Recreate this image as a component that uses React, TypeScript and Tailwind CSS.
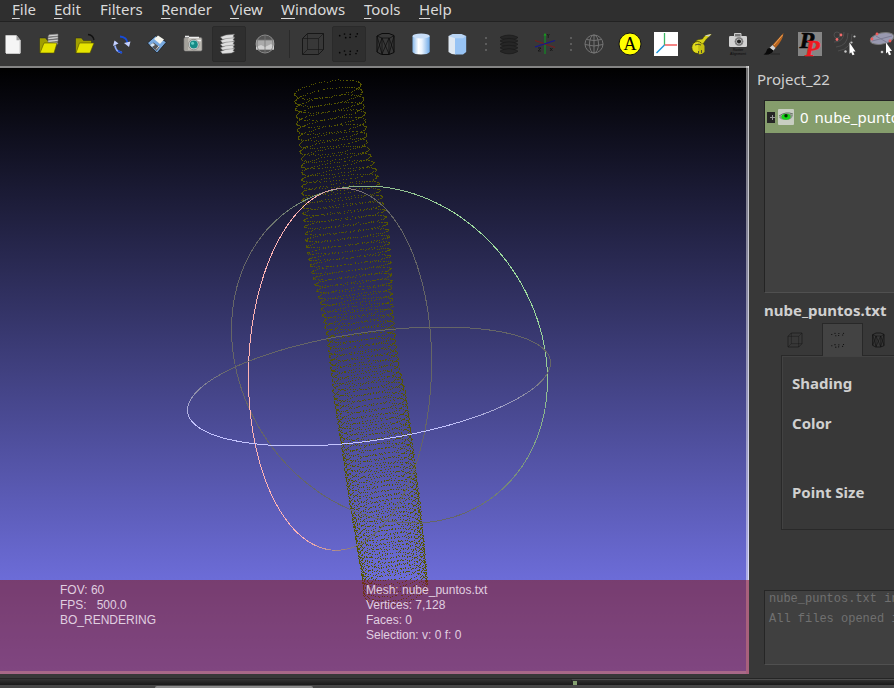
import React from "react";

const NOTO = "font-['Noto_Sans',sans-serif]";

type P = { children?: React.ReactNode; active?: boolean };

function Cell({ children, active }: P) {
  return (
    <div className={`flex h-[36px] shrink-0 items-center justify-center ${active ? "mx-px w-[34px] rounded-[2px] border border-[#2a2a2a] bg-[#2f2f2f]" : "w-[36px]"}`}>
      <svg width="24" height="24" viewBox="0 0 24 24" className="shrink-0 overflow-visible">
        {children}
      </svg>
    </div>
  );
}

const Wire = () => (
  <g fill="none" stroke="#141414" strokeWidth="0.9">
    <path d="M1.500 6.500 6.500 1.500H22.500V17.500L17.500 22.500H1.500z" />
    <path d="M1.500 6.500H17.500V22.500M17.500 6.500 22.500 1.500M6.500 1.500V17.500H22.500M1.500 22.500 6.500 17.500" strokeWidth="0.6" />
  </g>
);

const dotSpots = [[2.700, 3.700], [7.500, 2], [8.700, 5.700], [13.300, 2.300], [13, 5.300], [19, 4.500], [20.300, 1.800]];
const Dots = () => (
  <g fill="#060606">
    {dotSpots.map(([x, y], i) => <circle key={i} cx={x} cy={y} r="0.850" />)}
    {dotSpots.map(([x, y], i) => <circle key={i} cx={x} cy={y + 17} r="0.850" />)}
  </g>
);

const WireCyl = () => (
  <g fill="none" stroke="#0b0b0b" strokeWidth="1">
    <path d="M4 4 9 1.500h7l5 2v17L16 22.500H8.500L4 20z" />
    <path d="M4 4 9 6h8l4-2.500M9 6v16M16 6v16M4 4 9 22M9 6 16 22M21 4 16 22M4 20 9 6M9 22 16 6 21 20" strokeWidth="0.700" />
  </g>
);

const layers = [0, 3.600, 7.200, 10.800, 14.400];

function Menu({ t, k = 0, w }: { t: string; k?: number; w: string }) {
  return (
    <span className={`${w} shrink-0 whitespace-pre`}>
      {t.slice(0, k)}
      <span className="underline decoration-1 underline-offset-[3px]">{t[k]}</span>
      {t.slice(k + 1)}
    </span>
  );
}

function Grip({ w }: { w: string }) {
  return (
    <div className={`flex h-[14px] shrink-0 flex-col justify-between ${w}`}>
      <i className="h-[2px] w-[2px] bg-[#5c5c5c]" />
      <i className="h-[2px] w-[2px] bg-[#5c5c5c]" />
      <i className="h-[2px] w-[2px] bg-[#5c5c5c]" />
    </div>
  );
}

function Toolbar() {
  return (
    <div className="flex h-[45px] shrink-0 items-center overflow-hidden border-t border-[#222] bg-[#383838]">
      <div className="-ml-[5px] flex shrink-0 items-center">
        <Cell>
          <path d="M4.500 3.200h11l4 5V21H4.500z" fill="#f5f5f5" />
          <path d="M15.500 3.200v5h4z" fill="#999" />
          <path d="M19 9v12.500H5" stroke="#c9c9c9" fill="none" />
        </Cell>
        <Cell>
          <path d="M2.500 6h6l2 2.500h8V13l-5 8H2.500z" fill="#a19f00" stroke="#222" strokeWidth=".5" />
          <g fill="#d5d5d5" stroke="#777" strokeWidth=".6">
            <path d="m11 11 9-1 1 2-10 1zM11 8.300l10-1 0 2-10 1zM11 5.600l10-1 0 2-10 1zM12 2.800l9-.8v2l-10 1z" />
          </g>
          <path d="M3 21 7 11h13l-3 10z" fill="#e6e400" stroke="#555200" strokeWidth=".6" />
        </Cell>
        <Cell>
          <path d="M2.500 6h6l2 2.500h8V13l-5 8H2.500z" fill="#a19f00" stroke="#222" strokeWidth=".5" />
          <path d="M3 21 6.500 11H21l-4 10z" fill="#e6e400" stroke="#555200" strokeWidth=".6" />
          <path d="M15 2.500q5 .5 6 5.500" stroke="#111" fill="none" strokeWidth="1.300" />
        </Cell>
        <Cell>
          <path d="M11 4.500q6.500.5 7.500 6" stroke="#174bd8" fill="none" strokeWidth="1.800" />
          <path d="m15 11 6.500-1.500L20 15z" fill="#c4d1ff" />
          <path d="M12.500 20.500q-6-1-6.500-7" stroke="#8daaf8" fill="none" strokeWidth="1.800" />
          <path d="m4 14 1.500-5.500 4 3z" fill="#c4d1ff" />
          <path d="m9 18.500 4 2.500" stroke="#174bd8" strokeWidth="1.800" />
        </Cell>
        <Cell>
          <path d="m2.500 11 8-7 11 6-9.500 11z" fill="#78a9df" stroke="#111" strokeWidth=".7" />
          <path d="m9 7 4-3.500 6 4-4 4.500z" fill="#f5f5ee" />
          <path d="m5 13 3.500-2.500 6 4.500-3 4z" fill="#555" />
          <path d="m5 13 3-2 2 2-3 2z" fill="#d4e5f5" />
          <path d="m11 17.500 3-3.500" stroke="#ddd" />
        </Cell>
        <Cell>
          <rect x="3" y="5.500" width="18" height="13.500" rx="1.500" fill="#bdbab3" stroke="#777" strokeWidth=".7" />
          <path d="M4 4.500h4M8 5.500h10M15 8.500h5" stroke="#eee" strokeWidth="1.300" />
          <path d="M4 6v12M6 6v12" stroke="#8b8984" />
          <circle cx="12.800" cy="12.600" r="5.200" fill="#ddd" stroke="#666" strokeWidth=".6" />
          <circle cx="12.800" cy="12.600" r="4" fill="#168b86" />
          <circle cx="11.600" cy="11.200" r="1.500" fill="#66cec5" />
        </Cell>
        <Cell active>
          {layers.map((y, i) => <path key={i} d={`M3.500 ${5 + y}L9 ${3 + y}l8.500-.8-1.500 2 1.500 1-3 1.500-9 .6z`} fill="#dedede" stroke="#777" strokeWidth=".45" />)}
        </Cell>
        <Cell>
          <circle cx="12" cy="12" r="9" fill="#555" stroke="#898989" />
          <rect x="3" y="8" width="18" height="9.500" fill="#aaa" />
          <path d="m3 15 5-2 4 2 6-3 3 2v3.500H3z" fill="#d0d0d0" />
          <path d="M12 3v18M6 5q-4 7 0 14M18 5q4 7 0 14M3 8h18" stroke="#777" fill="none" strokeWidth=".8" />
        </Cell>
        <div className="flex w-[12px] shrink-0 justify-center">
          <i className="h-[28px] w-px bg-[#2a2a2a]" />
        </div>
        <Cell><Wire /></Cell>
        <Cell active><Dots /></Cell>
        <Cell><WireCyl /></Cell>
        <Cell>
          <defs>
            <linearGradient id="cyl">
              <stop offset="0" stopColor="#86b7ea" />
              <stop offset=".35" stopColor="#fff" />
              <stop offset=".55" stopColor="#e8f2fd" />
              <stop offset="1" stopColor="#6eaae8" />
            </linearGradient>
          </defs>
          <path d="M3.500 4v16q1.500 2.500 8.500 2.500t8.700-2.500V4z" fill="url(#cyl)" />
          <ellipse cx="12.100" cy="4" rx="8.600" ry="2.400" fill="#c7ddf7" />
        </Cell>
        <Cell>
          <path d="M3.500 4v16q3 2.500 7 2.500V4z" fill="#dfe8f2" />
          <path d="M10 5.500V22.500h8l3.200-2.500V4z" fill="#97c3f4" />
          <path d="m3.500 4 4-2h9l4.700 2-3.200 2.200H10z" fill="#b9d5f5" />
        </Cell>
        <Grip w="w-[16px] pl-[10px]" />
        <Cell>
          {layers.map((y, i) => <path key={i} d={`M3.500 ${5 + y * 0.950}q8.500-4 17 0v1q-8.500 4.500-17 0z`} fill="#262626" stroke="#171717" strokeWidth=".6" />)}
        </Cell>
        <Cell>
          <path d="M12 3v19" stroke="#1f6a2b" strokeWidth="2" />
          <path d="m2 8.500 20 7" stroke="#7c1a1a" strokeWidth="1" />
          <path d="m2 15 20-6.500" stroke="#16168e" strokeWidth="1.200" />
          <path d="m12 1-1.500 2.500h3z" fill="#18a51c" />
          <path d="M14 2l1.200 1.500L16.500 2M15.200 3.500V6M5 16h3l-3 3h3M17 16l2.500 3M19.500 16l-2.500 3" stroke="#151515" fill="none" strokeWidth=".8" />
        </Cell>
        <Grip w="w-[13px] pl-[7px]" />
        <Cell>
          <g fill="none" stroke="#747474" strokeWidth="1">
            <circle cx="12" cy="12" r="9" />
            <ellipse cx="12" cy="12" rx="4.500" ry="9" />
            <path d="M3 12.500q9 3 18 0M12 3v18M4.500 7.500q7.500 2 15 0" />
          </g>
        </Cell>
        <Cell>
          <circle cx="12" cy="12" r="11" fill="#ff0" stroke="#111" strokeWidth="1" />
          <text x="12" y="18" textAnchor="middle" fontSize="18" className="font-['Liberation_Serif',serif]" fill="#000">A</text>
        </Cell>
        <Cell>
          <rect width="24" height="24" fill="#fff" />
          <path d="M10.500 1v12" stroke="#3db765" strokeWidth="1.300" />
          <path d="M10.500 13H23" stroke="#f05b5b" strokeWidth="1.500" />
          <path d="m10.500 13-8 8" stroke="#1b95d9" strokeWidth="1.500" />
        </Cell>
        <Cell>
          <path d="M5 10q2-3 7.500-3 1.500-4 7.500-5l1.500.5-5 4.500-3.500 5z" fill="#d8d21b" stroke="#4a4800" strokeWidth=".6" />
          <path d="m14.500 3.500 7-1.500-2.500 2.500z" fill="#ccc" />
          <ellipse cx="7.500" cy="15.500" rx="5.700" ry="6" fill="#dfd91c" stroke="#333000" strokeWidth=".7" />
          <path d="M8 11q6 0 6.500 3v6q-3 3-6 2z" fill="#c5bf10" />
          <path d="M5 13q3-1.500 6 0M8.500 21.500v-2.500M11.500 21v-3" stroke="#333" strokeWidth=".8" fill="none" />
        </Cell>
        <Cell>
          <rect x="3" y="4" width="18" height="11" rx="1.300" fill="#d2d2d2" />
          <path d="M8.500 4.500V1.500h6.500v3" fill="#777" stroke="#ccc" />
          <circle cx="13" cy="9.500" r="4" fill="#666" stroke="#888" />
          <circle cx="13" cy="9.500" r="2.500" fill="#222" stroke="#ddd" strokeWidth=".8" />
          <text x="12" y="18.800" textAnchor="middle" fontSize="3.600" className="font-['Liberation_Sans',sans-serif]" fill="#0b0b0b">Raster</text>
          <text x="12" y="22.800" textAnchor="middle" fontSize="3.600" className="font-['Liberation_Sans',sans-serif]" fill="#0b0b0b">Alignment</text>
        </Cell>
        <Cell>
          <path d="M21.500 1 10.500 13l3 3Q21 8 21.500 1z" fill="#b96520" />
          <path d="M20.500 3 12 13" stroke="#e9a259" strokeWidth="1" />
          <path d="m10.500 13 3 3-2.500 3-3.500-3z" fill="#d5d5d5" />
          <path d="M8 16q-3 0-3.500 3-1 3-3 3.500 8 1 10-4z" fill="#0a0a0a" />
          <path d="M8.500 22H18" stroke="#222" strokeWidth=".8" />
        </Cell>
        <Cell>
          <rect width="24" height="24" fill="#858585" />
          <text x="1.500" y="16" fontSize="24" fontWeight="bold" fontStyle="italic" className="font-['Liberation_Serif',serif]" fill="#050505" stroke="#050505" strokeWidth=".6">P</text>
          <text x="7" y="23.500" fontSize="24" fontWeight="bold" fontStyle="italic" className="font-['Liberation_Serif',serif]" fill="#f01820" stroke="#f01820" strokeWidth=".5">P</text>
        </Cell>
        <Cell>
          <g fill="none" stroke="#4e4e4e" strokeWidth="1">
            <circle cx="3" cy="3" r="3" /><path d="M10 0q0 10-10 10M14 1q0 13-12 14M18 2q0 15-14 17" />
          </g>
          <g fill="#ef6a6a"><circle cx="7" cy="3" r="1.400" /><circle cx="3" cy="7.500" r="1.400" /></g>
          <g fill="#c8c8c8"><circle cx="20.500" cy="4.500" r="1.100" /><circle cx="17.500" cy="10.500" r="1.100" /><circle cx="11.500" cy="19.500" r="1.200" /></g>
          <path d="m15.500 10.500 6 9h-2.500l1.500 3-2 .8-1.300-3-1.700 1.500z" fill="#fff" />
        </Cell>
        <Cell>
          <ellipse cx="12" cy="6.500" rx="12" ry="5.500" fill="#9999b0" stroke="#777" transform="rotate(-12 12 6)" />
          <path d="m2 9 20-5M6 4l12 7" stroke="#7c7c94" />
          <g fill="#ef5a5a"><circle cx="7" cy="2" r="1.400" /><circle cx="2" cy="7" r="1.400" /><circle cx="20" cy="9" r="1.400" /></g>
          <circle cx="12" cy="20" r="1.300" fill="#c8c8c8" />
          <path d="m16 10.500 6 8.500h-2.500l1.500 3.500-2 .8-1.300-3.300-1.700 1.500z" fill="#fff" />
        </Cell>
      </div>
    </div>
  );
}

/* Screen silhouette of the tube: [y, x] samples for its two sides. */
const LEFT = [[84, 293], [93, 294], [130, 297], [160, 301], [205, 302], [253, 307], [270, 311], [303, 320], [338, 327], [400, 334], [445, 341], [500, 349], [570, 361], [590, 363], [620, 367]];
const RIGHT = [[70, 359], [83, 360], [100, 363], [120, 365], [143, 367], [155, 370], [170, 376], [187, 379], [203, 383], [223, 387], [237, 389], [270, 391], [300, 392], [330, 394], [370, 399], [393, 405], [420, 409], [470, 415], [500, 419], [550, 424], [585, 427], [620, 431]];

function sample(t: number[][], y: number) {
  for (let i = 1; i < t.length; i++) {
    if (y <= t[i][0]) {
      const [a, b] = [t[i - 1], t[i]];
      return a[1] + ((b[1] - a[1]) * (y - a[0])) / (b[0] - a[0]);
    }
  }
  return t[t.length - 1][1];
}

function cloud() {
  let d = "";
  let seed = 7;
  const rnd = () => {
    seed = (seed * 16807) % 2147483647;
    return seed / 2147483647 - 0.5;
  };
  const N = 90;
  for (let r = 0; r < N; r++) {
    const s = r / (N - 1);
    const cy = 89 + 499 * (s * 1.310 - 0.310 * s * s);
    const q = (cy - 89) / 499;
    const l = sample(LEFT, cy + 4);
    const rt = sample(RIGHT, cy - 4);
    const cx = (l + rt) / 2;
    const rx = (rt - l) / 2;
    const ry = 8 - 5 * Math.min(1, q * 3) + 13 * Math.max(0, q - 0.330) * 1.500;
    for (let k = 0; k < 74; k++) {
      const a = ((k + 0.300) / 74) * Math.PI * 2 + rnd() * 0.050;
      const ca = Math.cos(a);
      const x = Math.round(cx + rx * ca + rnd() * 0.900);
      const y = Math.round(cy - 5 * ca + ry * Math.sin(a) + rnd() * 0.900);
      d += `M${x} ${y}h1v1h-1z`;
    }
  }
  return d;
}

type Ring = { cx: number; cy: number; w: number; h: number; r: number; c: number[]; f: (u: number, v: number) => number };
const RINGS: Ring[] = [
  { cx: 389.5, cy: 354.5, w: 158, h: 168.5, r: 0.150, c: [160, 225, 160], f: (u, v) => 0.200 + u * 0.650 - v * 0.550 },
  { cx: 340, cy: 369.3, w: 91.6, h: 181, r: -0.040, c: [255, 180, 180], f: (u) => 0.450 - u * 1.500 },
  { cx: 369, cy: 386.500, w: 181.500, h: 59.500, r: -0.396, c: [196, 196, 255], f: (_u, v) => 0.300 + v * 1.100 },
];

function Trackball() {
  return (
    <g strokeWidth="1" fill="none" shapeRendering="crispEdges">
      {RINGS.map((g, n) => {
        const ph = Math.acos(g.r);
        const pt = (i: number) => {
          const t = (i / 120) * Math.PI * 2;
          return [Math.cos(t), Math.cos(t - ph)];
        };
        return Array.from({ length: 120 }, (_, i) => {
          const [u, v] = pt(i);
          const [p, q] = pt(i + 1);
          const m = Math.max(0, Math.min(1, g.f(u, v)));
          const col = g.c.map((c) => Math.round(102 + (c - 102) * m)).join(",");
          return <line key={n * 200 + i} x1={g.cx + g.w * u} y1={g.cy + g.h * v} x2={g.cx + g.w * p} y2={g.cy + g.h * q} stroke={`rgb(${col})`} />;
        });
      })}
    </g>
  );
}

function Viewport() {
  return (
    <div className="relative h-[608px] w-[749px] shrink-0 bg-[linear-gradient(to_bottom,#000,#8080ff)]">
      <svg width="749" height="608" viewBox="0 66 749 608" className="block">
        <path d={cloud()} fill="#565600" shapeRendering="crispEdges" />
        <Trackball />
      </svg>
      <div className="absolute inset-x-0 bottom-0 flex h-[94px] bg-[rgba(128,25,30,0.56)] pl-[60px] pt-[3px] font-['Liberation_Sans',sans-serif] text-[12px] leading-[15px] text-[#e0cfe0]">
        <div className="w-[306px] whitespace-pre">
          <p>FOV: 60</p>
          <p>{"FPS:   500.0"}</p>
          <p>BO_RENDERING</p>
        </div>
        <div>
          <p>Mesh: nube_puntos.txt</p>
          <p>Vertices: 7,128</p>
          <p>Faces: 0</p>
          <p>Selection: v: 0 f: 0</p>
        </div>
      </div>
      <div className="absolute inset-x-0 top-0 h-[2px] bg-[#848484]" />
      <div className="absolute inset-x-0 bottom-0 h-[3px] bg-[#a86888]" />
      <div className="absolute right-0 top-0 flex h-[514px] w-[3px]">
        <i className="w-[2px] bg-white/45" />
        <i className="w-px bg-white/75" />
      </div>
      <div className="absolute bottom-0 right-0 h-[94px] w-[3px] bg-[#a8607c]" />
    </div>
  );
}

function SmallIcon({ children }: P) {
  return <svg width="16" height="16" viewBox="0 0 24 24" className="shrink-0 overflow-visible">{children}</svg>;
}

function SidePanel() {
  return (
    <div className={`flex w-[145px] shrink-0 flex-col overflow-hidden whitespace-nowrap bg-[#383838] text-[#d0d0d0] ${NOTO}`}>
      <div className="mt-[3px] h-[31px] pl-[8px] text-[15px] leading-[20px]">Project_22</div>
      <div className="ml-[15px] h-[193px] border-b border-l border-t border-b-[#505050] border-l-[#242424] border-t-[#242424] bg-[#404040]">
        <div className="flex h-[32px] items-center bg-[#859d6c] text-[15px] text-white">
          <div className="ml-[2px] flex h-[11px] w-[8px] shrink-0 items-center justify-center bg-[#252525]">
            <svg width="8" height="11"><path d="M3 5.500h5M5.500 3v5" stroke="#999" strokeWidth="1" /></svg>
          </div>
          <svg width="16" height="16" className="ml-[3px] shrink-0">
            <rect width="16" height="16" rx="1" fill="#c8cec2" />
            <path d="M1 8q7-6 14-2-1 5-7 5T1 8z" fill="#879484" />
            <ellipse cx="8" cy="7.800" rx="4.500" ry="3" fill="#16d516" />
            <circle cx="8" cy="6.800" r="1.700" fill="#032b03" />
            <path d="M1 7q7-5 14-2" stroke="#667066" fill="none" />
          </svg>
          <span className="ml-[6px] whitespace-pre">0</span>
          <span className="ml-[6px]">nube_puntos.txt</span>
        </div>
      </div>
      <div className="mt-[6px] h-[24px] pl-[15px] text-[15px] font-bold leading-[22px]">nube_puntos.txt</div>
      <div className="ml-[32px] flex h-[32px] items-stretch">
        <div className="flex w-[41px] items-center pl-[6px] pt-px"><SmallIcon><Wire /></SmallIcon></div>
        <div className="relative z-10 -mb-px flex w-[41px] items-center border-l border-r border-t border-[#282828] bg-[#434343] pl-[7px]"><SmallIcon><Dots /></SmallIcon></div>
        <div className="flex items-center pl-[7px] pt-px"><SmallIcon><WireCyl /></SmallIcon></div>
      </div>
      <div className="ml-[32px] flex h-[175px] flex-col border-b border-l border-t border-[#292929] pl-[10px] pt-[17px] text-[15px] font-bold leading-[20px] shadow-[inset_1px_1px_0_#424242]">
        <span className="h-[40px]">Shading</span>
        <span className="h-[69px]">Color</span>
        <span>Point Size</span>
      </div>
      <div className="ml-[15px] mt-[60px] h-[75px] border-b border-l border-t border-b-[#505050] border-l-[#262626] border-t-[#262626] bg-[#404040] pl-[4px] font-['Liberation_Mono',monospace] text-[12px] leading-[20px] text-[#707070]">
        <p className="-mt-[2px]">nube_puntos.txt in 15 msec</p>
        <p>All files opened in 20 msec</p>
      </div>
    </div>
  );
}

export default function App() {
  return (
    <div className="flex h-[688px] w-[894px] flex-col overflow-hidden bg-[#383838]">
      <div className={`flex h-[21px] shrink-0 bg-[#2f2f2f] pl-[12px] text-[15px] leading-[18px] text-[#dadada] ${NOTO}`}>
        <Menu t="File" w="w-[42px]" />
        <Menu t="Edit" w="w-[46px]" />
        <Menu t="Filters" k={2} w="w-[61px]" />
        <Menu t="Render" w="w-[69px]" />
        <Menu t="View" w="w-[51px]" />
        <Menu t="Windows" w="w-[83px]" />
        <Menu t="Tools" w="w-[55px]" />
        <Menu t="Help" w="w-[40px]" />
      </div>
      <Toolbar />
      <div className="flex h-[608px] shrink-0">
        <Viewport />
        <SidePanel />
      </div>
      <div className="h-[4px] shrink-0" />
      <div className="flex h-[7px] shrink-0 border-t border-[#252525] bg-linear-to-b from-[#343434] to-[#1a1a1a]">
        <div className="flex-1" />
        <div className="flex w-[323px] border-l border-t border-l-[#222] border-t-[#4c4c4c]">
          <div className="ml-px mt-px h-[4px] w-[4px] bg-[#84a070]" />
        </div>
      </div>
      <div className="flex h-[3px] shrink-0 bg-[#484848]">
        <div className="ml-[155px] mt-px h-[2px] w-[158px] rounded-t-sm bg-[#8c8c8c]" />
      </div>
    </div>
  );
}
